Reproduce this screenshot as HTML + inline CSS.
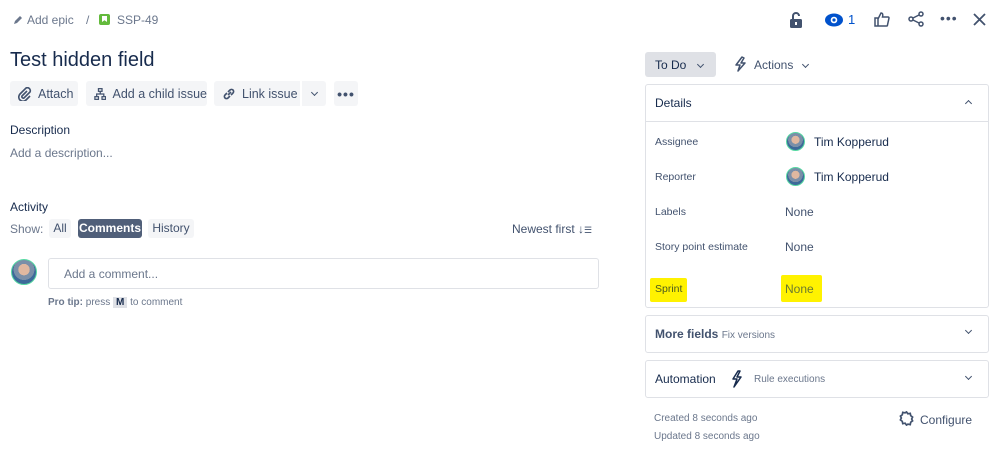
<!DOCTYPE html>
<html><head><meta charset="utf-8"><style>
*{box-sizing:border-box;margin:0;padding:0}
body{width:999px;height:476px;background:#fff;font-family:"Liberation Sans",sans-serif;color:#172b4d;position:relative;overflow:hidden;font-size:12px}
.a{position:absolute;white-space:nowrap}
.btn{position:absolute;background:#f4f5f7;border-radius:3px;height:25px;top:81px;display:flex;align-items:center;font-size:12.5px;color:#42526e;white-space:nowrap}
.box{position:absolute;left:645px;width:344px;border:1px solid #dfe1e6;border-radius:3px}
.lbl{position:absolute;left:655px;font-size:10.5px;color:#42526e}
.val{position:absolute;left:785px;font-size:12px;color:#42526e}
.av{position:absolute;border-radius:50%;background:radial-gradient(circle at 50% 40%,#e0b8a0 0 30%,#7a8fa8 31% 55%,#3d6a99 56%);border:1px solid #57d9a3}
.chev{display:inline-block;width:5px;height:5px;border-right:1.6px solid #42526e;border-bottom:1.6px solid #42526e;transform:rotate(45deg)}
</style></head><body>
<svg class="a" style="left:13px;top:15px" width="10" height="10" viewBox="0 0 10 10"><path d="M1 9l1-3 5-5 2 2-5 5z" fill="#6b778c"/></svg>
<div class="a" style="left:27px;top:13px;font-size:12px;color:#6b778c">Add epic</div>
<div class="a" style="left:86px;top:13px;font-size:12px;color:#6b778c">/</div>
<div class="a" style="left:99px;top:14px;width:11px;height:11px;background:#63ba3c;border-radius:2px"><div style="position:absolute;left:3px;top:2px;width:5px;height:6px;background:#fff;clip-path:polygon(0 0,100% 0,100% 100%,50% 70%,0 100%)"></div></div>
<div class="a" style="left:117px;top:13px;font-size:12px;color:#6b778c">SSP-49</div>
<div class="a" style="left:10px;top:49px;font-size:20px;color:#172b4d">Test hidden field</div>
<div class="btn" style="left:10px;width:68px;padding-left:8px"><svg width="14" height="14" viewBox="0 0 14 14"><path d="M9 4l-5 5a1.5 1.5 0 0 0 2 2l6-6a3 3 0 0 0-4-4L2 7a4 4 0 0 0 6 6l4-4" fill="none" stroke="#42526e" stroke-width="1.6"/></svg><span style="margin-left:6px">Attach</span></div>
<div class="btn" style="left:86px;width:121px;padding-left:8px"><svg width="14" height="14" viewBox="0 0 14 14"><g fill="none" stroke="#42526e" stroke-width="1.4"><rect x="5" y="1" width="4" height="3"/><rect x="1" y="10" width="4" height="3"/><rect x="9" y="10" width="4" height="3"/><path d="M7 4v3M3 10V7h8v3"/></g></svg><span style="margin-left:6px">Add a child issue</span></div>
<div class="btn" style="left:214px;width:86px;padding-left:8px;border-radius:3px 0 0 3px"><svg width="14" height="14" viewBox="0 0 14 14"><g fill="none" stroke="#42526e" stroke-width="1.6"><path d="M6 8l3-3M5 6L3 8a2 2 0 0 0 3 3l2-2M9 8l2-2a2 2 0 0 0-3-3L6 5"/></g></svg><span style="margin-left:6px">Link issue</span></div>
<div class="btn" style="left:302px;width:24px;justify-content:center;border-radius:0 3px 3px 0"><span class="chev" style="margin-top:-3px"></span></div>
<div class="btn" style="left:334px;width:24px;justify-content:center;font-size:14px;letter-spacing:1px;font-weight:bold">•••</div>
<div class="a" style="left:10px;top:123px;font-size:12px;color:#172b4d">Description</div>
<div class="a" style="left:10px;top:146px;font-size:12px;color:#6b778c">Add a description...</div>
<div class="a" style="left:10px;top:200px;font-size:12px">Activity</div>
<div class="a" style="left:10px;top:222px;font-size:12px;color:#6b778c">Show:</div>
<div class="a" style="left:49px;top:219px;width:22px;height:19px;background:#f4f5f7;border-radius:3px;font-size:12px;color:#42526e;text-align:center;line-height:19px">All</div>
<div class="a" style="left:78px;top:219px;width:64px;height:19px;background:#505f79;border-radius:3px;font-size:12px;color:#fff;font-weight:bold;text-align:center;line-height:19px">Comments</div>
<div class="a" style="left:148px;top:219px;width:46px;height:19px;background:#f4f5f7;border-radius:3px;font-size:12px;color:#42526e;text-align:center;line-height:19px">History</div>
<div class="a" style="left:512px;top:222px;font-size:12px;color:#42526e">Newest first ↓<span style="font-size:9px">☰</span></div>
<div class="av" style="left:11px;top:259px;width:26px;height:26px"></div>
<div class="a" style="left:48px;top:258px;width:551px;height:31px;border:1px solid #dfe1e6;border-radius:3px;padding:8px 15px;font-size:12px;color:#6b778c">Add a comment...</div>
<div class="a" style="left:48px;top:297px;font-size:10px;color:#6b778c"><b>Pro tip:</b> press <span style="background:#dfe1e6;padding:0 3px;font-weight:bold;color:#172b4d">M</span> to comment</div>
<svg class="a" style="left:789px;top:11px" width="14" height="18" viewBox="0 0 14 18"><path d="M4 8V5a3 3 0 0 1 6 0" fill="none" stroke="#42526e" stroke-width="2"/><rect x="1" y="8" width="12" height="9" rx="1.5" fill="#42526e"/><rect x="6" y="11" width="2" height="3" fill="#fff"/></svg>
<svg class="a" style="left:825px;top:13px" width="18" height="14" viewBox="0 0 18 14"><ellipse cx="9" cy="7" rx="9" ry="6.5" fill="#0052cc"/><circle cx="9" cy="7" r="3.3" fill="#fff"/><circle cx="9" cy="7" r="1.6" fill="#0052cc"/></svg>
<div class="a" style="left:848px;top:12px;font-size:13px;color:#0052cc">1</div>
<svg class="a" style="left:874px;top:11px" width="16" height="16" viewBox="0 0 16 16"><path d="M1 7h3v8H1zM4 8l3-6c2 0 2 2 1.5 4H14a1 1 0 0 1 1 1l-1.5 7a1 1 0 0 1-1 1H4" fill="none" stroke="#42526e" stroke-width="1.5"/></svg>
<svg class="a" style="left:908px;top:11px" width="16" height="16" viewBox="0 0 16 16"><g fill="none" stroke="#42526e" stroke-width="1.5"><circle cx="3" cy="8" r="2"/><circle cx="13" cy="3" r="2"/><circle cx="13" cy="13" r="2"/><path d="M5 7l6-3M5 9l6 3"/></g></svg>
<div class="a" style="left:940px;top:10px;font-size:14px;color:#42526e;letter-spacing:1px">•••</div>
<svg class="a" style="left:973px;top:13px" width="13" height="13" viewBox="0 0 13 13"><path d="M1 1l11 11M12 1L1 12" stroke="#42526e" stroke-width="1.8"/></svg>
<div class="a" style="left:645px;top:52px;width:71px;height:25px;background:#dfe1e6;border-radius:3px;font-size:12px;color:#172b4d;padding:6px 0 0 10px">To Do <span class="chev" style="margin-left:8px;margin-bottom:2px"></span></div>
<svg class="a" style="left:734px;top:56px" width="14" height="16" viewBox="0 0 14 16"><path d="M8 1L2 9h4l-2 6 7-8H7l3-5z" fill="none" stroke="#42526e" stroke-width="1.5" stroke-linejoin="round"/></svg>
<div class="a" style="left:754px;top:58px;font-size:12px;color:#42526e">Actions <span class="chev" style="margin-left:6px;margin-bottom:2px"></span></div>
<div class="box" style="top:84px;height:224px"></div>
<div class="a" style="left:646px;top:121px;width:342px;height:1px;background:#dfe1e6"></div>
<div class="a" style="left:655px;top:96px;font-size:12px;color:#172b4d">Details</div>
<span class="a chev" style="left:966px;top:101px;transform:rotate(-135deg)"></span>
<div class="lbl" style="top:136px">Assignee</div>
<div class="av" style="left:786px;top:132px;width:19px;height:19px"></div>
<div class="val" style="left:814px;top:135px;color:#172b4d">Tim Kopperud</div>
<div class="lbl" style="top:171px">Reporter</div>
<div class="av" style="left:786px;top:167px;width:19px;height:19px"></div>
<div class="val" style="left:814px;top:170px;color:#172b4d">Tim Kopperud</div>
<div class="lbl" style="top:206px">Labels</div>
<div class="val" style="top:205px">None</div>
<div class="lbl" style="top:241px">Story point estimate</div>
<div class="val" style="top:240px">None</div>
<div class="a" style="left:650px;top:278px;width:37px;height:24px;background:#fff200;border-radius:2px"></div>
<div class="a" style="left:781px;top:275px;width:41px;height:27px;background:#fff200;border-radius:2px"></div>
<div class="lbl" style="top:283px;color:#4a5a20">Sprint</div>
<div class="val" style="top:282px;color:#6b7a30">None</div>
<div class="box" style="top:315px;height:38px"></div>
<div class="a" style="left:655px;top:327px;font-size:12px;font-weight:bold;color:#42526e">More fields <span style="font-weight:normal;font-size:10px;color:#6b778c">Fix versions</span></div>
<span class="a chev" style="left:966px;top:328px"></span>
<div class="box" style="top:360px;height:38px"></div>
<div class="a" style="left:655px;top:372px;font-size:12px;color:#172b4d">Automation</div>
<svg class="a" style="left:731px;top:370px" width="12" height="18" viewBox="0 0 12 18"><path d="M7 1L2 9h4l-3 8 7-10H6l3-6z" fill="none" stroke="#172b4d" stroke-width="1.5" stroke-linejoin="round"/></svg>
<div class="a" style="left:754px;top:374px;font-size:10px;color:#6b778c">Rule executions</div>
<span class="a chev" style="left:966px;top:374px"></span>
<div class="a" style="left:654px;top:413px;font-size:10px;color:#6b778c">Created 8 seconds ago</div>
<div class="a" style="left:654px;top:431px;font-size:10px;color:#6b778c">Updated 8 seconds ago</div>
<svg class="a" style="left:899px;top:411px" width="15" height="15" viewBox="0 0 16 16"><path d="M8 1l1.5 2 2.5-.5.5 2.5 2 1.5-1 2 1 2-2 1.5-.5 2.5-2.5-.5L8 15l-1.5-2-2.5.5-.5-2.5-2-1.5 1-2-1-2 2-1.5.5-2.5 2.5.5z" fill="none" stroke="#42526e" stroke-width="1.8"/></svg>
<div class="a" style="left:920px;top:413px;font-size:12px;color:#42526e">Configure</div>
</body></html>
